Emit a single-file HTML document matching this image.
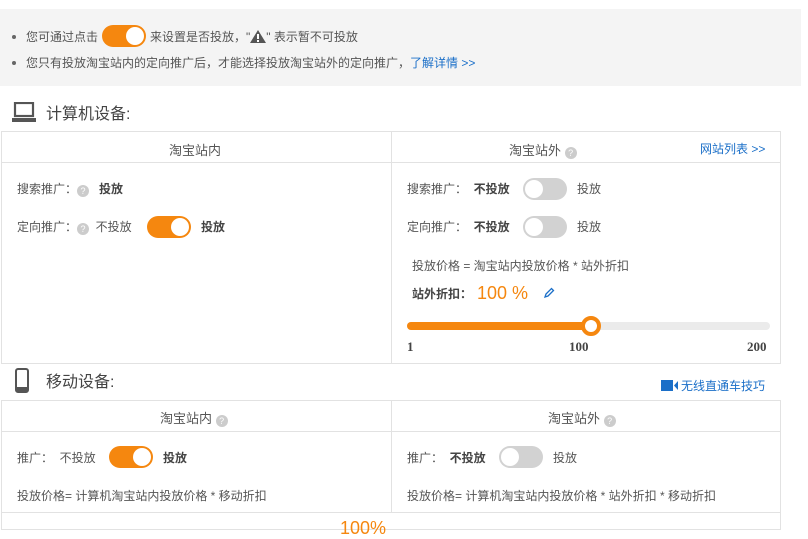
<!DOCTYPE html>
<html><head><meta charset="utf-8"><style>
*{margin:0;padding:0;box-sizing:border-box}
body{width:808px;height:524px;overflow:hidden;background:#fff;font-family:"Liberation Sans","Noto Sans CJK SC",sans-serif;font-size:12px;color:#555;position:relative}
.a{position:absolute;white-space:nowrap}
.tip{left:0;top:9px;width:801px;height:77px;background:#f4f4f4}
.dot{width:4px;height:4px;border-radius:2px;background:#666}
.sw{position:absolute;width:44px;height:22px;border-radius:11px}
.sw.on{background:#f5870f}
.sw.off{background:#d2d2d2}
.sw i{position:absolute;top:2px;width:18px;height:18px;border-radius:9px;background:#fff}
.sw.on i{right:2px}.sw.off i{left:2px}
.box{border:1px solid #e2e2e2}
.ln{background:#e2e2e2}
.q{display:inline-block;width:12px;height:12px;border-radius:6px;background:#ccc;color:#fff;font-size:9px;line-height:12px;text-align:center;vertical-align:-1px}
b{color:#444}
.blue{color:#1b6fc8}
.h{font-size:13px;color:#555}
</style></head><body>
<div class="a tip"></div>
<div class="a dot" style="left:12px;top:35px"></div>
<div class="a" style="left:26px;top:28px">您可通过点击</div>
<div class="sw on" style="left:102px;top:25px"><i></i></div>
<div class="a" style="left:150px;top:28px">来设置是否投放，"<svg width="16" height="13" viewBox="0 0 16 13" style="vertical-align:-2px"><path d="M8 0L16 13H0Z" fill="#555"/><rect x="7" y="4" width="2" height="5" fill="#fff"/><rect x="7" y="10" width="2" height="2" fill="#fff"/></svg>" 表示暂不可投放</div>
<div class="a dot" style="left:12px;top:61px"></div>
<div class="a" style="left:26px;top:54px">您只有投放淘宝站内的定向推广后，才能选择投放淘宝站外的定向推广，<span class="blue">了解详情 &gt;&gt;</span></div>

<svg class="a" style="left:12px;top:102px" width="24" height="21" viewBox="0 0 24 21"><rect x="3" y="1" width="18" height="13" fill="none" stroke="#555" stroke-width="2.2"/><rect x="0" y="16" width="24" height="4" fill="#555"/></svg>
<div class="a" style="left:46px;top:100px;font-size:16px;color:#444">计算机设备:</div>

<div class="a box" style="left:1px;top:131px;width:780px;height:233px"></div>
<div class="a ln" style="left:1px;top:162px;width:780px;height:1px"></div>
<div class="a ln" style="left:391px;top:131px;width:1px;height:233px"></div>
<div class="a h" style="left:169px;top:140px">淘宝站内</div>
<div class="a h" style="left:509px;top:140px">淘宝站外 <span class="q">?</span></div>
<div class="a blue" style="left:700px;top:140px">网站列表 &gt;&gt;</div>

<div class="a" style="left:17px;top:180px">搜索推广：<span class="q">?</span>&nbsp;&nbsp; <b>投放</b></div>
<div class="a" style="left:17px;top:218px">定向推广：<span class="q">?</span>&nbsp; 不投放</div>
<div class="sw on" style="left:147px;top:216px"><i></i></div>
<div class="a" style="left:201px;top:218px"><b>投放</b></div>

<div class="a" style="left:407px;top:180px">搜索推广：&nbsp; <b>不投放</b></div>
<div class="sw off" style="left:523px;top:178px"><i></i></div>
<div class="a" style="left:577px;top:180px">投放</div>
<div class="a" style="left:407px;top:218px">定向推广：&nbsp; <b>不投放</b></div>
<div class="sw off" style="left:523px;top:216px"><i></i></div>
<div class="a" style="left:577px;top:218px">投放</div>
<div class="a" style="left:412px;top:257px">投放价格 = 淘宝站内投放价格 * 站外折扣</div>
<div class="a" style="left:412px;top:285px"><b>站外折扣：</b></div>
<div class="a" style="left:477px;top:283px;font-size:18px;color:#f5870f">100 %</div>
<svg class="a" style="left:543px;top:287px" width="12" height="12" viewBox="0 0 12 12"><path d="M2 10L3 7L8.5 1.5L10.5 3.5L5 9Z" fill="none" stroke="#1b6fc8" stroke-width="1.3"/></svg>
<div class="a" style="left:407px;top:322px;width:363px;height:8px;border-radius:4px;background:#ebebeb"></div>
<div class="a" style="left:407px;top:322px;width:184px;height:8px;border-radius:4px;background:#f5870f"></div>
<div class="a" style="left:581px;top:316px;width:20px;height:20px;border-radius:10px;background:#fff;border:4px solid #f5870f"></div>
<div class="a" style="left:407px;top:339px;font-weight:bold;font-family:'Liberation Serif',serif;font-size:13px;color:#444">1</div>
<div class="a" style="left:569px;top:339px;font-weight:bold;font-family:'Liberation Serif',serif;font-size:13px;color:#444">100</div>
<div class="a" style="left:747px;top:339px;font-weight:bold;font-family:'Liberation Serif',serif;font-size:13px;color:#444">200</div>

<svg class="a" style="left:15px;top:368px" width="14" height="25" viewBox="0 0 14 25"><rect x="1" y="1" width="12" height="23" rx="2" fill="none" stroke="#555" stroke-width="2"/><rect x="1" y="19" width="12" height="5" fill="#555"/></svg>
<div class="a" style="left:46px;top:368px;font-size:16px;color:#444">移动设备:</div>
<div class="a blue" style="left:661px;top:377px"><svg width="20" height="11" viewBox="0 0 20 11" style="vertical-align:-1px"><rect x="0" y="0" width="12" height="11" fill="#1b6fc8"/><path d="M13 5.5L17 1V10Z" fill="#1b6fc8"/></svg>无线直通车技巧</div>

<div class="a box" style="left:1px;top:400px;width:780px;height:130px"></div>
<div class="a ln" style="left:1px;top:431px;width:780px;height:1px"></div>
<div class="a ln" style="left:1px;top:512px;width:780px;height:1px"></div>
<div class="a ln" style="left:391px;top:400px;width:1px;height:113px"></div>
<div class="a h" style="left:160px;top:408px">淘宝站内 <span class="q">?</span></div>
<div class="a h" style="left:548px;top:408px">淘宝站外 <span class="q">?</span></div>
<div class="a" style="left:17px;top:449px">推广：&nbsp; 不投放</div>
<div class="sw on" style="left:109px;top:446px"><i></i></div>
<div class="a" style="left:163px;top:449px"><b>投放</b></div>
<div class="a" style="left:407px;top:449px">推广：&nbsp; <b>不投放</b></div>
<div class="sw off" style="left:499px;top:446px"><i></i></div>
<div class="a" style="left:553px;top:449px">投放</div>
<div class="a" style="left:17px;top:487px">投放价格= 计算机淘宝站内投放价格 * 移动折扣</div>
<div class="a" style="left:407px;top:487px">投放价格= 计算机淘宝站内投放价格 * 站外折扣 * 移动折扣</div>
<div class="a" style="left:340px;top:518px;font-size:18px;color:#f5870f">100%</div>
</body></html>
